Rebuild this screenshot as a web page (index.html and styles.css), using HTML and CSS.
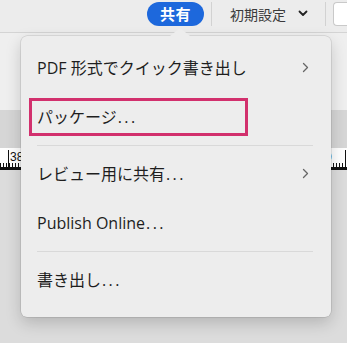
FILE: index.html
```html
<!DOCTYPE html>
<html lang="ja">
<head>
<meta charset="utf-8">
<link rel="stylesheet" href="styles.css">
</head>
<body>
<div class="app">
  <header class="toolbar">
    <div class="grow"></div>
    <button class="share">共有</button>
    <span class="vsep"></span>
    <div class="preset"><span>初期設定</span><svg class="caret" width="10" height="7" viewBox="0 0 10 7"><path d="M1.5 1.5 L5 5 L8.5 1.5" fill="none" stroke="#222" stroke-width="1.8" stroke-linecap="round" stroke-linejoin="round"/></svg></div>
    <span class="vsep"></span>
    <div class="search"></div>
  </header>
  <div class="workspace">
    <div class="band-light"></div>
    <div class="band-gray"></div>
    <div class="ruler">
      <div class="ruler-left"><span class="rnum">38</span></div>
      <div class="ruler-right"><span class="rnum">0</span></div>
    </div>
    <div class="canvas"></div>
  </div>

  <div class="menu">
    <div class="menu-arrow"></div>
    <div class="item"><span>PDF 形式でクイック書き出し</span>
      <svg class="chev" width="7" height="11" viewBox="0 0 7 11"><path d="M1.5 1.5 L5.5 5.5 L1.5 9.5" fill="none" stroke="#666" stroke-width="1.3" stroke-linecap="round" stroke-linejoin="round"/></svg>
    </div>
    <div class="item"><span>パッケージ<span class="dots">...</span></span></div>
    <div class="msep"></div>
    <div class="item"><span>レビュー用に共有<span class="dots">...</span></span>
      <svg class="chev" width="7" height="11" viewBox="0 0 7 11"><path d="M1.5 1.5 L5.5 5.5 L1.5 9.5" fill="none" stroke="#666" stroke-width="1.3" stroke-linecap="round" stroke-linejoin="round"/></svg>
    </div>
    <div class="item"><span>Publish Online<span class="dots">...</span></span></div>
    <div class="msep"></div>
    <div class="item"><span>書き出し<span class="dots">...</span></span></div>
    <div class="highlight"></div>
  </div>
</div>
</body>
</html>
```

FILE: styles.css
```css
* { box-sizing: border-box; }
html, body { margin: 0; padding: 0; }
body {
  width: 347px;
  height: 343px;
  overflow: hidden;
  font-family: "Noto Sans CJK JP", "Noto Sans", sans-serif;
  background: #dcdcdc;
}
.app {
  position: relative;
  width: 347px;
  height: 343px;
  display: flex;
  flex-direction: column;
}
.toolbar {
  height: 33px;
  flex: none;
  display: flex;
  align-items: center;
  background: #ececec;
  border-bottom: 1px solid #d4d4d4;
  padding-bottom: 5px;
}
.grow { flex: 1; }
.share {
  flex: none;
  width: 57px;
  height: 24px;
  border: none;
  border-radius: 12px;
  background: #1d68dc;
  color: #fff;
  font-family: inherit;
  font-size: 15px;
  font-weight: 700;
  line-height: 24px;
  padding: 0;
  letter-spacing: 0.5px;
}
.vsep {
  flex: none;
  width: 1px;
  height: 24px;
  background: #d2d2d2;
  margin: 0 7px 0 7px;
}
.preset {
  flex: none;
  display: flex;
  align-items: center;
  gap: 12px;
  font-size: 14px;
  color: #3a3a3a;
  padding-left: 11px;
  padding-right: 10px;
}
.caret { flex: none; }
.search {
  flex: none;
  width: 14px;
  height: 24px;
  background: #fff;
  border: 1px solid #c9c9c9;
  border-right: none;
  border-radius: 4px 0 0 4px;
}
.workspace {
  flex: 1;
  display: flex;
  flex-direction: column;
}
.band-light { height: 77px; background: #efefef; }
.band-gray { height: 38px; background: #d6d6d6; }
.ruler {
  height: 22px;
  display: flex;
  justify-content: space-between;
  background: #fff;
  border-bottom: 3px solid #111;
  background-image: repeating-linear-gradient(90deg, #111 0 1px, transparent 1px 3px);
  background-size: 100% 4px;
  background-repeat: no-repeat;
  background-position: 0 100%;
}
.ruler-left, .ruler-right {
  position: relative;
  width: 22px;
  height: 100%;
}
.ruler-left::before {
  content: "";
  position: absolute;
  left: 8px; top: 2px; bottom: 0;
  width: 1px; background: #111;
}
.ruler-right::after {
  content: "";
  position: absolute;
  right: 1px; top: 2px; bottom: 0;
  width: 1px; background: #111;
}
.rnum {
  position: absolute;
  top: 2px;
  font-family: "Liberation Sans", sans-serif;
  font-size: 12px;
  color: #111;
}
.ruler-left .rnum { left: 10px; }
.ruler-right .rnum { left: 0; }
.canvas { flex: 1; background: #dcdcdc; }

.menu {
  position: absolute;
  left: 21px;
  top: 36px;
  width: 310px;
  height: 281px;
  background: #ededed;
  border-radius: 6px;
  box-shadow: 0 0 0 0.5px rgba(0,0,0,0.16), 0 6px 16px rgba(0,0,0,0.18);
  display: flex;
  flex-direction: column;
  padding: 7px 0 12px;
}
.menu-arrow {
  position: absolute;
  left: 149px;
  top: -8px;
  width: 0; height: 0;
  border-left: 10px solid transparent;
  border-right: 10px solid transparent;
  border-bottom: 8px solid #ededed;
}
.item {
  height: 49px;
  flex: none;
  display: flex;
  align-items: center;
  justify-content: space-between;
  padding: 0 22px 0 16px;
  font-family: "Open Sans", "Noto Sans CJK JP", sans-serif;
  font-size: 16px;
  line-height: 22px;
  color: #1e1e1e;
}
.dots {
  letter-spacing: 2.4px;
  margin-left: 1px;
}
.chev { flex: none; }
.msep {
  height: 8px;
  flex: none;
  margin: 0 18px 0 16px;
  display: flex;
  align-items: center;
}
.msep::before {
  content: "";
  flex: 1;
  height: 1px;
  background: #d9d9d9;
}
.highlight {
  position: absolute;
  left: 8px;
  top: 62px;
  width: 219px;
  height: 38px;
  border: 3px solid #d2306d;
}
```
